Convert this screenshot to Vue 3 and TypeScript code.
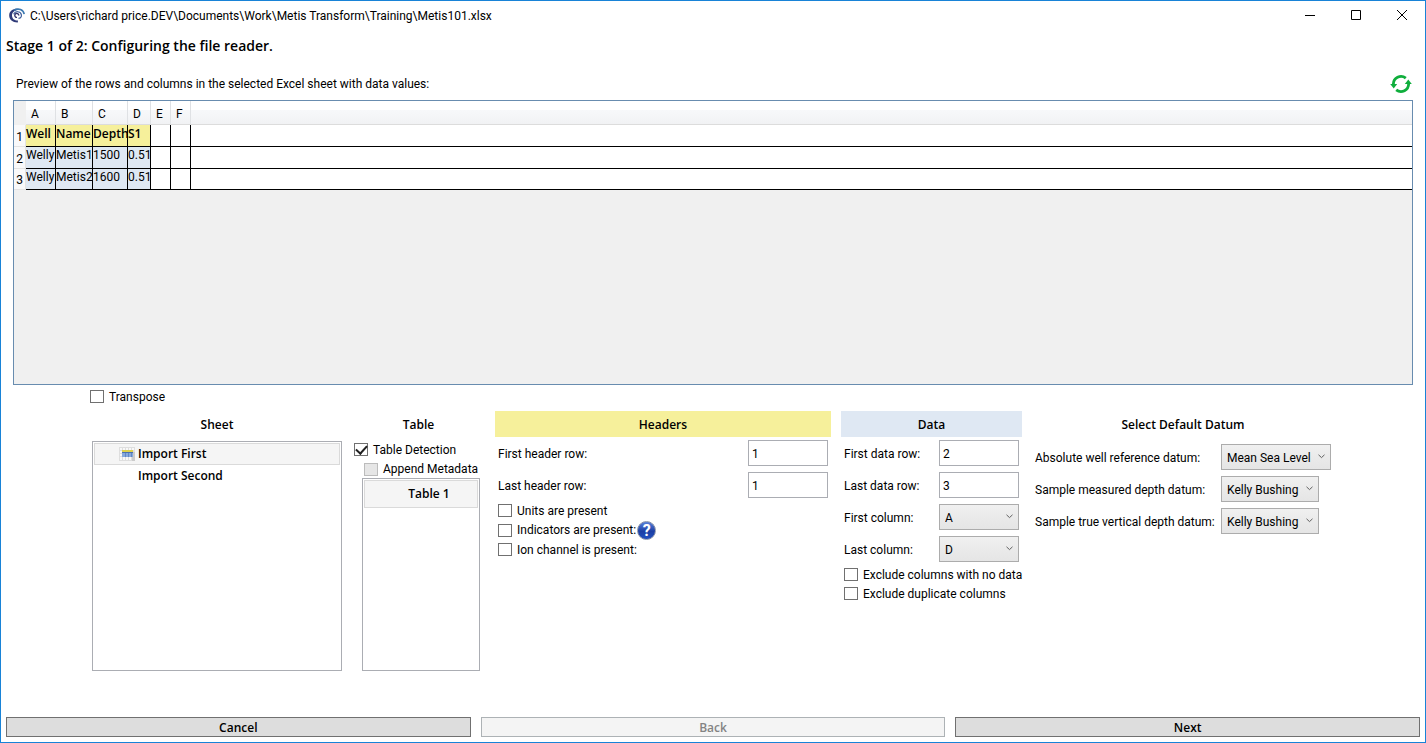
<script setup lang="ts">
import { ref } from 'vue'

interface Row { n: number; cells: string[]; header: boolean }

const letters = ['A', 'B', 'C', 'D', 'E', 'F']
const rows: Row[] = [
  { n: 1, cells: ['Well', 'Name', 'Depth', 'S1'], header: true },
  { n: 2, cells: ['Welly', 'Metis1', '1500', '0.51'], header: false },
  { n: 3, cells: ['Welly', 'Metis2', '1600', '0.51'], header: false },
]
const sheets = ['Import First', 'Import Second']
const sheet = ref(0)

const transpose = ref(false)
const tableDetection = ref(true)
const units = ref(false)
const indicators = ref(false)
const ionChannel = ref(false)
const excludeEmpty = ref(false)
const excludeDuplicate = ref(false)

const firstHeader = ref('1')
const lastHeader = ref('1')
const firstData = ref('2')
const lastData = ref('3')
const columnFields = ref([
  { id: 'first-col', label: 'First column:', value: 'A' },
  { id: 'last-col', label: 'Last column:', value: 'D' },
])
const datumNames = ['Mean Sea Level', 'Kelly Bushing']
const datums = ref([
  { id: 'd-abs', label: 'Absolute well reference datum:', value: 'Mean Sea Level', wide: true },
  { id: 'd-md', label: 'Sample measured depth datum:', value: 'Kelly Bushing', wide: false },
  { id: 'd-tvd', label: 'Sample true vertical depth datum:', value: 'Kelly Bushing', wide: false },
])
</script>

<template>
  <div class="window">
    <header class="titlebar">
      <svg class="logo" viewBox="0 0 16 16" aria-hidden="true">
        <path d="M12.200 2C7-.8.2 1.800.2 7.400C.2 11.400 3.800 14.600 8.800 14.400L9 12.600C5.400 12.600 3 10.400 3 7.400C3 3.200 8 .8 12.200 2Z" fill="#2f3a78" />
        <path d="M5 2.400C9.400-.2 14.400 1.600 15.200 6.200" fill="none" stroke="#3a78b0" stroke-width="1.600" />
        <path d="M4.600 6.200C6.200 2.800 11.600 2.800 12.400 6.800C12.800 9.200 11 10.400 9.400 10.200" fill="none" stroke="#3f5f9c" stroke-width="1.200" />
        <path d="M9.800 7.400A2 2 0 1 0 8 9.400" fill="none" stroke="#34346c" stroke-width="1.400" />
      </svg>
      <span class="path">C:\Users\richard price.DEV\Documents\Work\Metis Transform\Training\Metis101.xlsx</span>
      <button class="caption" aria-label="Minimize">
        <svg viewBox="0 0 10 10"><path d="M0 5.500H10" /></svg>
      </button>
      <button class="caption" aria-label="Maximize">
        <svg viewBox="0 0 10 10"><path d="M.5.5H9.500V9.500H.5Z" /></svg>
      </button>
      <button class="caption" aria-label="Close">
        <svg viewBox="0 0 10 10"><path d="M0 0L10 10M10 0L0 10" /></svg>
      </button>
    </header>

    <h1>Stage 1 of 2: Configuring the file reader.</h1>

    <div class="preview-bar">
      <span>Preview of the rows and columns in the selected Excel sheet with data values:</span>
      <button class="refresh" aria-label="Refresh">
        <svg viewBox="0 0 22 20">
          <g fill="none" stroke="#0fae3c" stroke-width="2.800">
            <path d="M3.400 10.500A7.600 7.600 0 0 1 15.800 4.200" />
            <path d="M18.600 9.500A7.600 7.600 0 0 1 6.200 15.800" />
          </g>
          <path d="M.2 10H7.200L3.700 14.600Z" fill="#0fae3c" />
          <path d="M14.800 10H21.800L18.300 5.400Z" fill="#0fae3c" />
        </svg>
      </button>
    </div>

    <main class="preview">
      <table>
        <colgroup>
          <col class="c-num" /><col class="c-a" /><col class="c-b" /><col class="c-c" /><col class="c-d" /><col class="c-e" /><col class="c-e" /><col />
        </colgroup>
        <thead>
          <tr>
            <td class="corner"></td>
            <th v-for="l in letters" :key="l" scope="col">{{ l }}</th>
            <td class="rest"></td>
          </tr>
        </thead>
        <tbody>
          <tr v-for="r in rows" :key="r.n" :class="{ head: r.header }">
            <th scope="row">{{ r.n }}</th>
            <td v-for="c in r.cells" :key="c" class="filled">{{ c }}</td>
            <td></td>
            <td></td>
            <td class="rest"></td>
          </tr>
        </tbody>
      </table>
    </main>

    <label class="check transpose"><input v-model="transpose" type="checkbox" />Transpose</label>

    <div class="panels">
      <section class="panel">
        <h2>Sheet</h2>
        <ul class="list sheets">
          <li v-for="(s, i) in sheets" :key="s">
            <button :class="{ selected: i === sheet }" @click="sheet = i">
              <svg viewBox="0 0 16 14" aria-hidden="true">
                <g v-if="i === sheet">
                  <path d="M0 0H16V14H0Z" fill="#dedede" />
                  <path d="M1 1H3V3H1ZM4 1H6V3H4ZM7 1H9V3H7ZM10 1H12V3H10ZM13 1H15V3H13ZM1 4H3V6H1ZM1 7H3V9H1ZM1 10H3V13H1ZM4 10H6V13H4ZM7 10H9V13H7ZM10 10H12V13H10Z" fill="#f8f8f8" />
                  <path d="M13 5H16V14H13Z" fill="#cbcbcb" />
                  <path d="M3 3H14V5H3Z" fill="#ddd04c" />
                  <path d="M3 5H14V10H3Z" fill="#86a8dc" />
                  <path d="M3 5.500H14" stroke="#4a70b0" fill="none" />
                  <path d="M6.500 6V10M9.500 6V10M12.500 6V10" stroke="#6288c4" fill="none" />
                </g>
              </svg>
              {{ s }}
            </button>
          </li>
        </ul>
      </section>

      <section class="panel">
        <h2>Table</h2>
        <div class="table-options">
          <label class="check"><input v-model="tableDetection" type="checkbox" />Table Detection</label>
          <label class="check nested"><input type="checkbox" disabled />Append Metadata</label>
          <ul class="list tables">
            <li><button class="selected">Table 1</button></li>
          </ul>
        </div>
      </section>

      <section class="panel">
        <h2 class="yellow">Headers</h2>
        <div class="fields">
          <div class="field">
            <label for="fh">First header row:</label>
            <input id="fh" v-model="firstHeader" type="text" />
          </div>
          <div class="field">
            <label for="lh">Last header row:</label>
            <input id="lh" v-model="lastHeader" type="text" />
          </div>
        </div>
        <div class="checks">
          <label class="check"><input v-model="units" type="checkbox" />Units are present</label>
          <div class="with-help">
            <label class="check"><input v-model="indicators" type="checkbox" />Indicators are present:</label>
            <button class="help" aria-label="Help">?</button>
          </div>
          <label class="check"><input v-model="ionChannel" type="checkbox" />Ion channel is present:</label>
        </div>
      </section>

      <section class="panel">
        <h2 class="blue">Data</h2>
        <div class="fields">
          <div class="field">
            <label for="fd">First data row:</label>
            <input id="fd" v-model="firstData" type="text" />
          </div>
          <div class="field">
            <label for="ld">Last data row:</label>
            <input id="ld" v-model="lastData" type="text" />
          </div>
          <div v-for="f in columnFields" :key="f.id" class="field">
            <label :for="f.id">{{ f.label }}</label>
            <span class="drop">
              <select :id="f.id" v-model="f.value">
                <option v-for="l in letters" :key="l">{{ l }}</option>
              </select>
              <svg viewBox="0 0 7 5" aria-hidden="true"><path d="M.5.8L3.500 3.600L6.500.8" /></svg>
            </span>
          </div>
        </div>
        <div class="checks">
          <label class="check"><input v-model="excludeEmpty" type="checkbox" />Exclude columns with no data</label>
          <label class="check"><input v-model="excludeDuplicate" type="checkbox" />Exclude duplicate columns</label>
        </div>
      </section>

      <section class="panel">
        <h2>Select Default Datum</h2>
        <div class="datums">
          <div v-for="d in datums" :key="d.id" class="datum">
            <label :for="d.id">{{ d.label }}</label>
            <span class="drop" :class="d.wide ? 'wide' : 'medium'">
              <select :id="d.id" v-model="d.value">
                <option v-for="n in datumNames" :key="n">{{ n }}</option>
              </select>
              <svg viewBox="0 0 7 5" aria-hidden="true"><path d="M.5.8L3.500 3.600L6.500.8" /></svg>
            </span>
          </div>
        </div>
      </section>
    </div>

    <footer>
      <button>Cancel</button>
      <button disabled>Back</button>
      <button>Next</button>
    </footer>
  </div>
</template>

<style>
body { margin: 0; background: #fff; }
</style>

<style scoped>
.window {
  box-sizing: border-box;
  min-height: 100vh;
  display: flex;
  flex-direction: column;
  border: 1px solid #1883d7;
  background: #fff;
  color: #000;
  font: 12px/16px "Segoe UI", Roboto, sans-serif;
  white-space: nowrap;
}
.window * { box-sizing: border-box; }
button, input, select { font: inherit; color: inherit; margin: 0; }
button { padding: 0; border: 0; background: none; }
h1, h2, .list, .head .filled, footer button { font-family: "Segoe UI", "Open Sans", sans-serif; font-weight: 600; }

.titlebar { display: flex; align-items: center; height: 29px; padding-left: 8px; }
.logo { width: 16px; height: 16px; margin-right: 5px; }
.path { flex: 1; }
.caption { align-self: flex-start; width: 46px; height: 28px; display: grid; place-items: center; }
.caption svg { width: 10px; height: 10px; fill: none; stroke: #000; }

h1 { margin: 8px 5px 0; font-size: 14px; line-height: 16px; }
.preview-bar { display: flex; align-items: center; justify-content: space-between; margin: 19px 13px 5px 15px; height: 22px; }
.refresh, .refresh svg { display: block; width: 22px; height: 20px; }

.preview { flex: 1; min-height: 120px; margin: 0 12px; border: 1px solid #688caf; background: #f0f0f0; }
table { width: 100%; table-layout: fixed; border-collapse: separate; border-spacing: 0; }
.c-num { width: 12px; }
.c-a { width: 30px; }
.c-b { width: 37px; }
.c-c { width: 35px; }
.c-d { width: 23px; }
.c-e { width: 20px; }
th, td { padding: 0; text-align: left; font-weight: 400; }
thead th, thead td { height: 24px; background: linear-gradient(#fff 38%, #f7f8fa 40%, #f1f2f4); border-bottom: 1px solid #dcdcdc; }
thead th { padding: 2px 0 0 5px; border-right: 1px solid #dfe1e4; }
thead .corner { background: #f0f0f0; border-color: #f0f0f0; }
tbody th { height: 22px; padding-top: 2px; text-align: center; border-right: 1px solid #e3e3e3; border-bottom: 1px solid #e3e3e3; background: #f9f9fa; }
tbody td { height: 22px; border-right: 1px solid #000; border-bottom: 1px solid #000; background: #fff; vertical-align: top; }
tbody tr:last-child > * { height: 21px; }
tbody td.rest { border-right: 0; }
tbody .filled { background: #dfe8f3; }
.head .filled { padding-top: 1px; background: #f6f09b; }

.check { display: flex; align-items: center; gap: 5px; height: 19px; }
.check input {
  appearance: none;
  flex: none;
  display: grid;
  place-items: center;
  width: 14px;
  height: 13px;
  border: 1px solid #707070;
  background: #fff;
}
.check input:checked::before {
  content: "";
  width: 9px;
  height: 5px;
  margin-bottom: 2px;
  border: solid #212121;
  border-width: 0 0 2px 2px;
  transform: rotate(-48deg);
}
.check input:disabled { background: #e6e6e6; border-color: #bcbcbc; }
.transpose { margin: 2px 89px 0; align-self: flex-start; }

.panels {
  display: grid;
  grid-template-columns: 250px 133px minmax(250px, 1fr) 181px 302px;
  column-gap: 10px;
  margin: 5px 91px 0;
  min-height: 260px;
}
.panel { display: flex; flex-direction: column; }
h2 { margin: 0; padding-top: 2px; font-size: 12px; line-height: 24px; text-align: center; }
.yellow { background: #f6f09b; }
.blue { background: #dfe8f3; }

.list { flex: 1; margin: 0; padding: 1px; list-style: none; border: 1px solid #abadb3; }
.list button { display: flex; align-items: center; width: 100%; border: 1px solid transparent; }
.list .selected { background: #f5f5f5; border-color: #dadada; }
.sheets { margin-top: 4px; }
.sheets button { height: 22px; padding-left: 24px; gap: 3px; }
.sheets svg { width: 16px; height: 14px; }
.table-options { flex: 1; display: flex; flex-direction: column; padding: 3px 5px 0 2px; }
.table-options .nested { margin-left: 10px; height: 20px; }
.tables { margin-left: 8px; margin-top: -1px; }
.tables button { height: 28px; padding-left: 16px; justify-content: center; }

.fields { display: grid; gap: 6px; padding: 3px 3px 0; }
.field { display: flex; align-items: center; justify-content: space-between; }
.field label, .datum label { padding-top: 2px; }
.field input, .field .drop { width: 80px; height: 26px; }
.field input { padding: 1px 3px 0; border: 1px solid #abadb3; background: #fff; }
.checks { padding: 3px 3px 0; }
.with-help { display: flex; align-items: center; gap: 1px; height: 20px; }
.help {
  width: 19px;
  height: 19px;
  border: 1px solid #8a93a8;
  border-radius: 50%;
  background: linear-gradient(#5a82dc, #1c3fa4 55%, #2350c0);
  color: #fff;
  font-size: 16px;
  line-height: 17px;
  font-weight: 700;
}
.drop { display: grid; align-items: center; height: 26px; }
.drop select {
  grid-area: 1 / 1;
  appearance: none;
  width: 100%;
  height: 26px;
  padding: 2px 5px 0;
  border: 1px solid #acacac;
  border-radius: 0;
  background: linear-gradient(#f0f0f0, #e5e5e5);
}
.drop svg { grid-area: 1 / 1; justify-self: end; width: 7px; height: 5px; margin: 0 6px 2px 0; fill: none; stroke: #606060; pointer-events: none; }
.wide { width: 110px; }
.medium { width: 98px; }
.datums { display: grid; gap: 6px; padding: 7px 3px 0; }
.datum { display: grid; grid-template-columns: 180px 1fr; column-gap: 6px; align-items: center; }

footer { display: grid; grid-template-columns: repeat(3, 1fr); gap: 10px; padding: 46px 5px 5px; }
footer button { height: 20px; padding-top: 2px; line-height: 16px; border: 1px solid #707070; background: #ddd; }
footer button:disabled { border-color: #adb2b5; background: #f4f4f4; color: #838383; }
</style>
